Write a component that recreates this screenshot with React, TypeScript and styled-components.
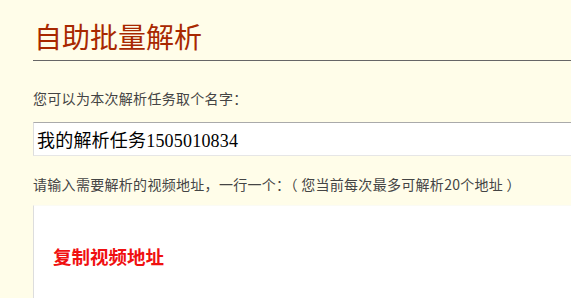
import React from 'react';
import styled, { createGlobalStyle } from 'styled-components';

const GlobalStyle = createGlobalStyle`
  html, body {
    margin: 0;
    padding: 0;
    background-color: #fffde9;
    overflow: hidden;
  }
`;

const Page = styled.div`
  box-sizing: border-box;
  display: flex;
  flex-direction: column;
  height: 298px;
  padding: 18px 0 0 33px;
  font-family: "Noto Sans CJK SC", "Noto Sans", sans-serif;
`;

const Title = styled.h1`
  margin: 0;
  padding: 0 0 6px 1px;
  border-bottom: 1px solid #666;
  color: #a82800;
  font-size: 28px;
  font-weight: normal;
  line-height: 36px;
`;

const Label = styled.p<{ $top: number }>`
  margin: ${(p) => p.$top}px 0 0;
  color: #444;
  font-size: 14px;
  line-height: 20px;
  letter-spacing: 0.3px;
`;

const NameInput = styled.input`
  box-sizing: border-box;
  display: block;
  width: 100%;
  height: 34px;
  margin-top: 14px;
  padding: 0 0 0 3px;
  border: 1px solid #ddd;
  border-right: none;
  border-top-color: #aaa;
  border-bottom-color: #e6e6e6;
  outline: none;
  background: #fff;
  color: #000;
  font-family: "Liberation Serif", "Noto Sans CJK SC", serif;
  font-size: 18px;
  letter-spacing: 0.2px;
`;

const UrlBox = styled.div`
  box-sizing: border-box;
  flex: 1;
  margin-top: 11px;
  padding: 38px 0 0 19px;
  border-left: 1px solid #ddd;
  border-top: 1px solid #fbfbf4;
  background: #fff;
`;

const Hint = styled.span`
  color: #f01010;
  font-family: "Noto Sans CJK SC", sans-serif;
  font-size: 18.5px;
  font-weight: bold;
  line-height: 24px;
`;

export default function App() {
  return (
    <>
      <GlobalStyle />
      <Page>
        <Title>自助批量解析</Title>
        <Label $top={27}>您可以为本次解析任务取个名字：</Label>
        <NameInput defaultValue="我的解析任务1505010834" />
        <Label $top={18}>
          请输入需要解析的视频地址，一行一个：（ 您当前每次最多可解析20个地址 ）
        </Label>
        <UrlBox>
          <Hint>复制视频地址</Hint>
        </UrlBox>
      </Page>
    </>
  );
}
